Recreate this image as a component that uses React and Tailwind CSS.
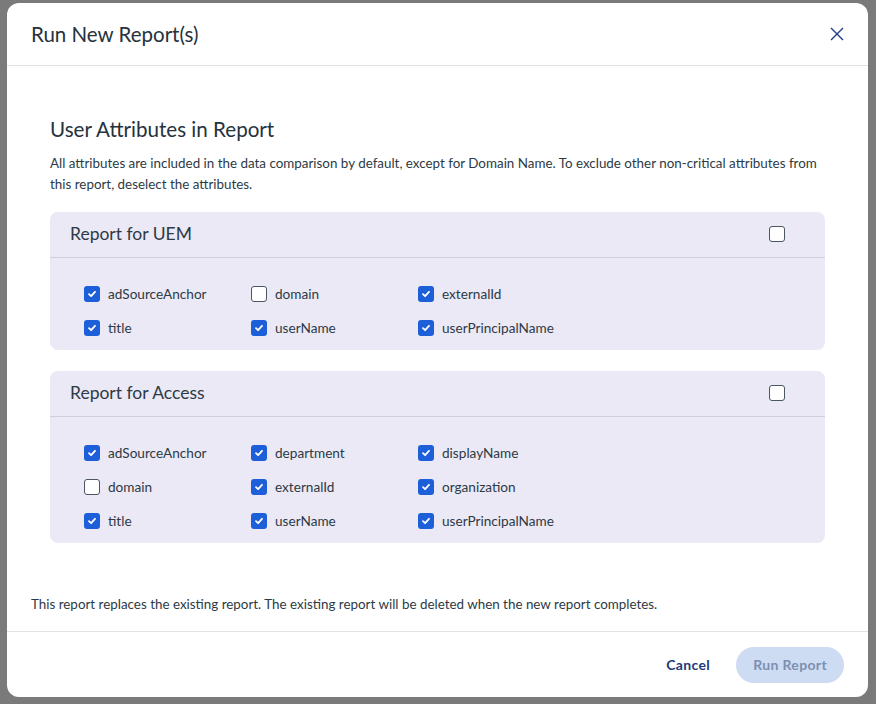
const font = { fontFamily: "Lato, 'Noto Sans', sans-serif" };

function Box({ checked }) {
  return checked ? (
    <span className="w-4 h-4 shrink-0 rounded-[3px] bg-[#1d5fd8] flex items-center justify-center">
      <svg width="10" height="10" viewBox="0 0 10 10"><path d="M2 5.2 4.1 7.2 8 2.8" stroke="white" strokeWidth="1.8" fill="none" strokeLinecap="round" strokeLinejoin="round" /></svg>
    </span>
  ) : (
    <span className="block w-4 h-4 shrink-0 rounded-[3px] border-[1.5px] border-[#4b5563] bg-white" />
  );
}

function Panel({ title, items, mt }) {
  return (
    <div className={`bg-[#ebe9f6] rounded-lg ${mt}`}>
      <div className="h-[46px] flex items-center justify-between px-5 border-b border-[#cfcfd8]">
        <span className="text-[17.5px] text-[#2d3a45]">{title}</span>
        <span className="mr-5"><Box /></span>
      </div>
      <div className="grid grid-cols-[167px_167px_167px] gap-y-[18px] pl-[34px] pt-[28px] pb-[14px]">
        {items.map(([label, c]) => (
          <div key={label} className="flex items-center gap-2 h-4 text-[13.6px] text-[#2d3a45]">
            <Box checked={c} />
            <span>{label}</span>
          </div>
        ))}
      </div>
    </div>
  );
}

export default function App() {
  return (
    <div className="w-[876px] h-[704px] bg-[#7a7a7a] pt-[3px] pl-[7px]" style={font}>
      <div className="w-[861px] h-[694px] bg-white rounded-xl flex flex-col">
        <div className="h-[63px] border-b border-[#e2e2e2] flex items-center justify-between pl-6 pr-6">
          <span className="text-[20.5px] text-[#26323c]">Run New Report(s)</span>
          <svg width="14" height="14" viewBox="0 0 14 14"><path d="M1 1l12 12M13 1 1 13" stroke="#1e3a8a" strokeWidth="1.4" /></svg>
        </div>
        <div className="flex-1 px-[43px] pt-[48px]">
          <div className="text-[20.6px] text-[#26323c]">User Attributes in Report</div>
          <p className="text-[13.4px] text-[#2d3a45] leading-[21px] mt-[8px]">
            All attributes are included in the data comparison by default, except for Domain Name. To exclude other non-critical attributes from this report, deselect the attributes.
          </p>
          <div className="mt-[17px]">
            <Panel title="Report for UEM" items={[["adSourceAnchor", 1], ["domain", 0], ["externalId", 1], ["title", 1], ["userName", 1], ["userPrincipalName", 1]]} />
            <Panel mt="mt-[21px]" title="Report for Access" items={[["adSourceAnchor", 1], ["department", 1], ["displayName", 1], ["domain", 0], ["externalId", 1], ["organization", 1], ["title", 1], ["userName", 1], ["userPrincipalName", 1]]} />
          </div>
        </div>
        <div className="px-6 pb-[17px] text-[13.4px] text-[#2d3a45]">
          This report replaces the existing report. The existing report will be deleted when the new report completes.
        </div>
        <div className="h-[66px] border-t border-[#e2e2e2] flex items-center justify-end gap-[26px] pr-6">
          <span className="text-[14px] font-bold text-[#1e3a7a] tracking-wide">Cancel</span>
          <span className="h-[36px] px-[17px] rounded-full bg-[#cddbf3] text-[#7d8fb0] text-[14px] font-bold flex items-center tracking-wide">Run Report</span>
        </div>
      </div>
    </div>
  );
}
